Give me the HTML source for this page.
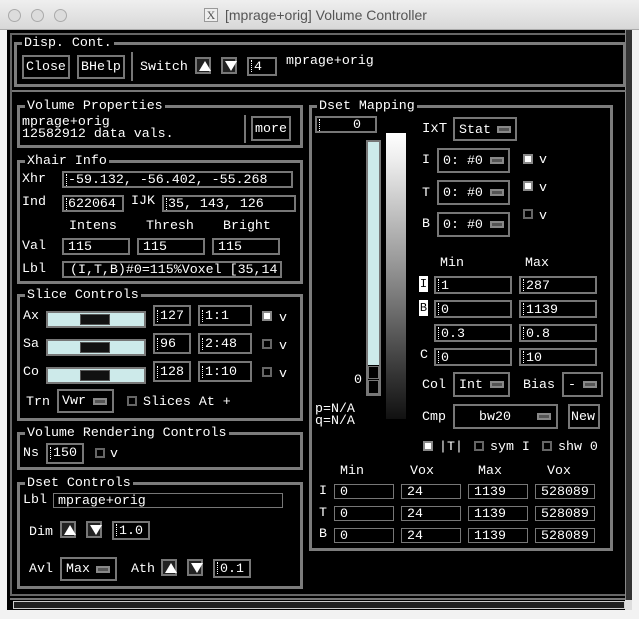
<!DOCTYPE html>
<html><head><meta charset="utf-8"><style>
*{margin:0;padding:0;box-sizing:border-box}
body{width:639px;height:619px;background:#f2f2f2;position:relative;overflow:hidden;font-family:"Liberation Mono",monospace;font-size:13.3px;color:#fff}
div,span{position:absolute}
.t{white-space:pre;line-height:14px;color:#fff}
.b{border:2px solid #777;background:#000}
.f{border:3px solid #7c7c7c}
.lab{background:#000;padding:0 2px;top:-9px;line-height:14px;white-space:pre}
.cb{width:10px;height:10px;border:2px solid #666;background:#000}
.on{background:#fff;border-color:#888}
.mi{width:14px;height:7px;border:2px solid #888;background:#555}
.ar{width:16px;height:17px;border:2px solid #777;background:#222}
.up{left:2px;top:2px;width:0;height:0;border-left:6px solid transparent;border-right:6px solid transparent;border-bottom:10px solid #fff}
.dn{left:2px;top:2px;width:0;height:0;border-left:6px solid transparent;border-right:6px solid transparent;border-top:10px solid #fff}
.cur{width:2px;height:12px;border-left:1px dotted #fff;top:1px;left:2px}
.sl{height:17px;background:#cdeaea;border:2px solid #777}
.th{left:32px;top:1px;width:30px;height:11px;background:#111;border:1px solid #555}
</style></head><body>
<div style="left:0;top:0;width:639px;height:30px;background:linear-gradient(#efefef,#d8d8d8);border-bottom:1px solid #aaa"></div>
<div style="left:8px;top:9px;width:13px;height:13px;border-radius:50%;background:#dcdcdc;border:1px solid #aaa"></div>
<div style="left:31px;top:9px;width:13px;height:13px;border-radius:50%;background:#dcdcdc;border:1px solid #aaa"></div>
<div style="left:54px;top:9px;width:13px;height:13px;border-radius:50%;background:#dcdcdc;border:1px solid #aaa"></div>
<div style="left:204px;top:8px;width:14px;height:14px;border:1px solid #999;background:#eee;color:#555;font:12px 'Liberation Serif',serif;text-align:center;line-height:12px">X</div>
<div class="t" style="left:225px;top:7px;font:14px 'Liberation Sans',sans-serif;color:#555">[mprage+orig] Volume Controller</div>
<div style="left:7px;top:30px;width:625px;height:580px;background:#000"></div>
<div style="left:10px;top:33px;width:618px;height:563px;border:2px solid #666"></div>
<div style="left:625px;top:30px;width:7px;height:570px;background:#333;border-left:1px solid #888"></div>
<div style="left:10px;top:598px;width:615px;height:2px;background:#777"></div>
<div style="left:13px;top:601px;width:612px;height:8px;background:#1e1e1e;border:1px solid #ccc"></div>
<div style="left:625px;top:600px;width:7px;height:10px;background:#ddd"></div>

<div class="f" style="left:14px;top:42px;width:612px;height:45px"><span class="lab" style="left:5px">Disp. Cont.</span></div>
<div class="b" style="left:22px;top:55px;width:48px;height:24px"><span class="t" style="left:2px;top:3px">Close</span></div>
<div class="b" style="left:77px;top:55px;width:48px;height:24px"><span class="t" style="left:2px;top:3px">BHelp</span></div>
<div style="left:131px;top:52px;width:2px;height:29px;background:#777"></div>
<div class="t" style="left:140px;top:60px">Switch</div>
<div class="ar" style="left:195px;top:57px"><span class="up"></span></div>
<div class="ar" style="left:221px;top:57px"><span class="dn"></span></div>
<div class="b" style="left:247px;top:57px;width:30px;height:19px"><span class="t" style="left:5px;top:1px">4</span><span class="cur"></span></div>
<div class="t" style="left:286px;top:54px">mprage+orig</div>
<div style="left:12px;top:90px;width:614px;height:2px;background:#777"></div>

<div class="f" style="left:17px;top:105px;width:286px;height:43px"><span class="lab" style="left:5px">Volume Properties</span></div>
<div class="t" style="left:22px;top:116px;line-height:12px">mprage+orig
12582912 data vals.</div>
<div style="left:244px;top:115px;width:2px;height:28px;background:#777"></div>
<div class="b" style="left:251px;top:116px;width:40px;height:25px"><span class="t" style="left:2px;top:4px">more</span></div>

<div class="f" style="left:17px;top:160px;width:286px;height:124px"><span class="lab" style="left:5px">Xhair Info</span></div>
<div class="t" style="left:22px;top:172px">Xhr</div>
<div class="b" style="left:62px;top:171px;width:231px;height:17px"><span class="t" style="left:4px;top:0">-59.132, -56.402, -55.268</span><span class="cur"></span></div>
<div class="t" style="left:22px;top:195px">Ind</div>
<div class="b" style="left:62px;top:195px;width:62px;height:17px"><span class="t" style="left:4px;top:0">622064</span><span class="cur"></span></div>
<div class="t" style="left:131px;top:194px">IJK</div>
<div class="b" style="left:162px;top:195px;width:134px;height:17px"><span class="t" style="left:4px;top:0">35, 143, 126</span><span class="cur"></span></div>
<div class="t" style="left:69px;top:219px">Intens</div>
<div class="t" style="left:146px;top:219px">Thresh</div>
<div class="t" style="left:223px;top:219px">Bright</div>
<div class="t" style="left:22px;top:239px">Val</div>
<div class="b" style="left:62px;top:238px;width:68px;height:17px"><span class="t" style="left:4px;top:0">115</span></div>
<div class="b" style="left:137px;top:238px;width:68px;height:17px"><span class="t" style="left:4px;top:0">115</span></div>
<div class="b" style="left:212px;top:238px;width:68px;height:17px"><span class="t" style="left:4px;top:0">115</span></div>
<div class="t" style="left:22px;top:262px">Lbl</div>
<div class="b" style="left:62px;top:261px;width:220px;height:17px;overflow:hidden"><span class="t" style="left:6px;top:0;width:210px;overflow:hidden">(I,T,B)#0=115%Voxel [35,14</span></div>

<div class="f" style="left:17px;top:294px;width:286px;height:127px"><span class="lab" style="left:5px">Slice Controls</span></div>
<div class="t" style="left:23px;top:309px">Ax</div>
<div class="sl" style="left:46px;top:311px;width:100px"><span class="th"></span></div>
<div class="b" style="left:153px;top:305px;width:38px;height:21px"><span class="t" style="left:5px;top:2px">127</span><span class="cur" style="top:3px"></span></div>
<div class="b" style="left:198px;top:305px;width:54px;height:21px"><span class="t" style="left:5px;top:2px">1:1</span><span class="cur" style="top:3px"></span></div>
<div class="cb on" style="left:262px;top:311px"></div><div class="t" style="left:279px;top:311px">v</div>
<div class="t" style="left:23px;top:337px">Sa</div>
<div class="sl" style="left:46px;top:339px;width:100px"><span class="th"></span></div>
<div class="b" style="left:153px;top:333px;width:38px;height:21px"><span class="t" style="left:5px;top:2px">96</span><span class="cur" style="top:3px"></span></div>
<div class="b" style="left:198px;top:333px;width:54px;height:21px"><span class="t" style="left:5px;top:2px">2:48</span><span class="cur" style="top:3px"></span></div>
<div class="cb" style="left:262px;top:339px"></div><div class="t" style="left:279px;top:339px">v</div>
<div class="t" style="left:23px;top:365px">Co</div>
<div class="sl" style="left:46px;top:367px;width:100px"><span class="th"></span></div>
<div class="b" style="left:153px;top:361px;width:38px;height:21px"><span class="t" style="left:5px;top:2px">128</span><span class="cur" style="top:3px"></span></div>
<div class="b" style="left:198px;top:361px;width:54px;height:21px"><span class="t" style="left:5px;top:2px">1:10</span><span class="cur" style="top:3px"></span></div>
<div class="cb" style="left:262px;top:367px"></div><div class="t" style="left:279px;top:367px">v</div>
<div class="t" style="left:26px;top:395px">Trn</div>
<div class="b" style="left:57px;top:389px;width:57px;height:24px"><span class="t" style="left:3px;top:3px">Vwr</span><span class="mi" style="left:34px;top:7px"></span></div>
<div class="cb" style="left:127px;top:396px"></div>
<div class="t" style="left:143px;top:395px">Slices At +</div>

<div class="f" style="left:17px;top:432px;width:286px;height:38px"><span class="lab" style="left:5px">Volume Rendering Controls</span></div>
<div class="t" style="left:23px;top:446px">Ns</div>
<div class="b" style="left:46px;top:443px;width:38px;height:21px"><span class="t" style="left:5px;top:1px">150</span><span class="cur" style="top:2px"></span></div>
<div class="cb" style="left:95px;top:448px"></div><div class="t" style="left:110px;top:447px">v</div>

<div class="f" style="left:17px;top:482px;width:286px;height:107px"><span class="lab" style="left:5px">Dset Controls</span></div>
<div class="t" style="left:23px;top:493px">Lbl</div>
<div class="b" style="left:53px;top:493px;width:230px;height:15px;border-width:1px"><span class="t" style="left:4px;top:0">mprage+orig</span></div>
<div class="t" style="left:29px;top:525px">Dim</div>
<div class="ar" style="left:60px;top:521px"><span class="up"></span></div>
<div class="ar" style="left:86px;top:521px"><span class="dn"></span></div>
<div class="b" style="left:112px;top:521px;width:38px;height:19px"><span class="t" style="left:5px;top:1px">1.0</span><span class="cur"></span></div>
<div class="t" style="left:29px;top:562px">Avl</div>
<div class="b" style="left:60px;top:557px;width:57px;height:24px"><span class="t" style="left:4px;top:3px">Max</span><span class="mi" style="left:34px;top:7px"></span></div>
<div class="t" style="left:131px;top:562px">Ath</div>
<div class="ar" style="left:161px;top:559px"><span class="up"></span></div>
<div class="ar" style="left:187px;top:559px"><span class="dn"></span></div>
<div class="b" style="left:213px;top:559px;width:38px;height:19px"><span class="t" style="left:5px;top:1px">0.1</span><span class="cur"></span></div>

<div class="f" style="left:309px;top:105px;width:304px;height:446px"><span class="lab" style="left:5px">Dset Mapping</span></div>
<div class="b" style="left:315px;top:116px;width:62px;height:17px"><span class="t" style="left:36px;top:0">0</span><span class="cur"></span></div>
<div style="left:366px;top:140px;width:15px;height:256px;border:2px solid #777;background:#000"></div>
<div style="left:368px;top:142px;width:11px;height:223px;background:#cdeaea"></div>
<div style="left:368px;top:366px;width:11px;height:13px;border:1px solid #777"></div>
<div style="left:368px;top:380px;width:11px;height:14px;border:1px solid #777"></div>
<div style="left:386px;top:133px;width:20px;height:286px;background:linear-gradient(#fff,#ececec 10%,#c8c8c8 25%,#999 45%,#666 65%,#333 85%,#111)"></div>
<div class="t" style="left:354px;top:373px">0</div>
<div class="t" style="left:315px;top:403px;line-height:12px">p=N/A
q=N/A</div>
<div class="t" style="left:422px;top:122px;font-size:14px">IxT</div>
<div class="b" style="left:453px;top:117px;width:64px;height:24px"><span class="t" style="left:4px;top:4px">Stat</span><span class="mi" style="left:42px;top:7px"></span></div>
<div class="t" style="left:422px;top:153px">I</div>
<div class="b" style="left:437px;top:148px;width:73px;height:25px"><span class="t" style="left:4px;top:4px">0: #0</span><span class="mi" style="left:51px;top:7px"></span></div>
<div class="cb on" style="left:523px;top:154px"></div><div class="t" style="left:539px;top:153px">v</div>
<div class="t" style="left:422px;top:186px">T</div>
<div class="b" style="left:437px;top:180px;width:73px;height:25px"><span class="t" style="left:4px;top:4px">0: #0</span><span class="mi" style="left:51px;top:7px"></span></div>
<div class="cb on" style="left:523px;top:181px"></div><div class="t" style="left:539px;top:181px">v</div>
<div class="t" style="left:422px;top:217px">B</div>
<div class="b" style="left:437px;top:212px;width:73px;height:25px"><span class="t" style="left:4px;top:4px">0: #0</span><span class="mi" style="left:51px;top:7px"></span></div>
<div class="cb" style="left:523px;top:209px"></div><div class="t" style="left:539px;top:209px">v</div>
<div class="t" style="left:440px;top:256px">Min</div>
<div class="t" style="left:525px;top:256px">Max</div>
<div style="left:419px;top:276px;width:9px;height:16px;background:#fff;color:#000;font-size:12px;line-height:16px;text-align:center">I</div>
<div class="b" style="left:434px;top:276px;width:78px;height:18px"><span class="t" style="left:5px;top:1px">1</span><span class="cur"></span></div>
<div class="b" style="left:519px;top:276px;width:78px;height:18px"><span class="t" style="left:5px;top:1px">287</span><span class="cur"></span></div>
<div style="left:419px;top:300px;width:9px;height:16px;background:#fff;color:#000;font-size:12px;line-height:16px;text-align:center">B</div>
<div class="b" style="left:434px;top:300px;width:78px;height:18px"><span class="t" style="left:5px;top:1px">0</span><span class="cur"></span></div>
<div class="b" style="left:519px;top:300px;width:78px;height:18px"><span class="t" style="left:5px;top:1px">1139</span><span class="cur"></span></div>
<div class="b" style="left:434px;top:324px;width:78px;height:18px"><span class="t" style="left:5px;top:1px">0.3</span><span class="cur"></span></div>
<div class="b" style="left:519px;top:324px;width:78px;height:18px"><span class="t" style="left:5px;top:1px">0.8</span><span class="cur"></span></div>
<div class="t" style="left:420px;top:348px">C</div>
<div class="b" style="left:434px;top:348px;width:78px;height:18px"><span class="t" style="left:5px;top:1px">0</span><span class="cur"></span></div>
<div class="b" style="left:519px;top:348px;width:78px;height:18px"><span class="t" style="left:5px;top:1px">10</span><span class="cur"></span></div>
<div class="t" style="left:422px;top:378px">Col</div>
<div class="b" style="left:453px;top:372px;width:57px;height:25px"><span class="t" style="left:4px;top:4px">Int</span><span class="mi" style="left:35px;top:7px"></span></div>
<div class="t" style="left:523px;top:378px">Bias</div>
<div class="b" style="left:562px;top:372px;width:41px;height:25px"><span class="t" style="left:4px;top:4px">-</span><span class="mi" style="left:19px;top:7px"></span></div>
<div class="t" style="left:422px;top:410px">Cmp</div>
<div class="b" style="left:453px;top:404px;width:105px;height:25px"><span class="t" style="left:24px;top:4px">bw20</span><span class="mi" style="left:82px;top:7px"></span></div>
<div class="b" style="left:568px;top:404px;width:32px;height:25px"><span class="t" style="left:1px;top:4px">New</span></div>
<div class="cb on" style="left:423px;top:441px"></div><div class="t" style="left:439px;top:440px">|T|</div>
<div class="cb" style="left:474px;top:441px"></div><div class="t" style="left:490px;top:440px">sym I</div>
<div class="cb" style="left:542px;top:441px"></div><div class="t" style="left:558px;top:440px">shw 0</div>
<div class="t" style="left:340px;top:464px">Min</div>
<div class="t" style="left:410px;top:464px">Vox</div>
<div class="t" style="left:478px;top:464px">Max</div>
<div class="t" style="left:547px;top:464px">Vox</div>
<div class="t" style="left:319px;top:484px">I</div>
<div class="t" style="left:319px;top:506px">T</div>
<div class="t" style="left:319px;top:527px">B</div>
<div class="b" style="left:334px;top:484px;width:60px;height:15px;border-width:1px"><span class="t" style="left:5px;top:0">0</span></div>
<div class="b" style="left:401px;top:484px;width:60px;height:15px;border-width:1px"><span class="t" style="left:5px;top:0">24</span></div>
<div class="b" style="left:468px;top:484px;width:60px;height:15px;border-width:1px"><span class="t" style="left:5px;top:0">1139</span></div>
<div class="b" style="left:535px;top:484px;width:60px;height:15px;border-width:1px"><span class="t" style="left:5px;top:0">528089</span></div>
<div class="b" style="left:334px;top:506px;width:60px;height:15px;border-width:1px"><span class="t" style="left:5px;top:0">0</span></div>
<div class="b" style="left:401px;top:506px;width:60px;height:15px;border-width:1px"><span class="t" style="left:5px;top:0">24</span></div>
<div class="b" style="left:468px;top:506px;width:60px;height:15px;border-width:1px"><span class="t" style="left:5px;top:0">1139</span></div>
<div class="b" style="left:535px;top:506px;width:60px;height:15px;border-width:1px"><span class="t" style="left:5px;top:0">528089</span></div>
<div class="b" style="left:334px;top:528px;width:60px;height:15px;border-width:1px"><span class="t" style="left:5px;top:0">0</span></div>
<div class="b" style="left:401px;top:528px;width:60px;height:15px;border-width:1px"><span class="t" style="left:5px;top:0">24</span></div>
<div class="b" style="left:468px;top:528px;width:60px;height:15px;border-width:1px"><span class="t" style="left:5px;top:0">1139</span></div>
<div class="b" style="left:535px;top:528px;width:60px;height:15px;border-width:1px"><span class="t" style="left:5px;top:0">528089</span></div>
</body></html>
